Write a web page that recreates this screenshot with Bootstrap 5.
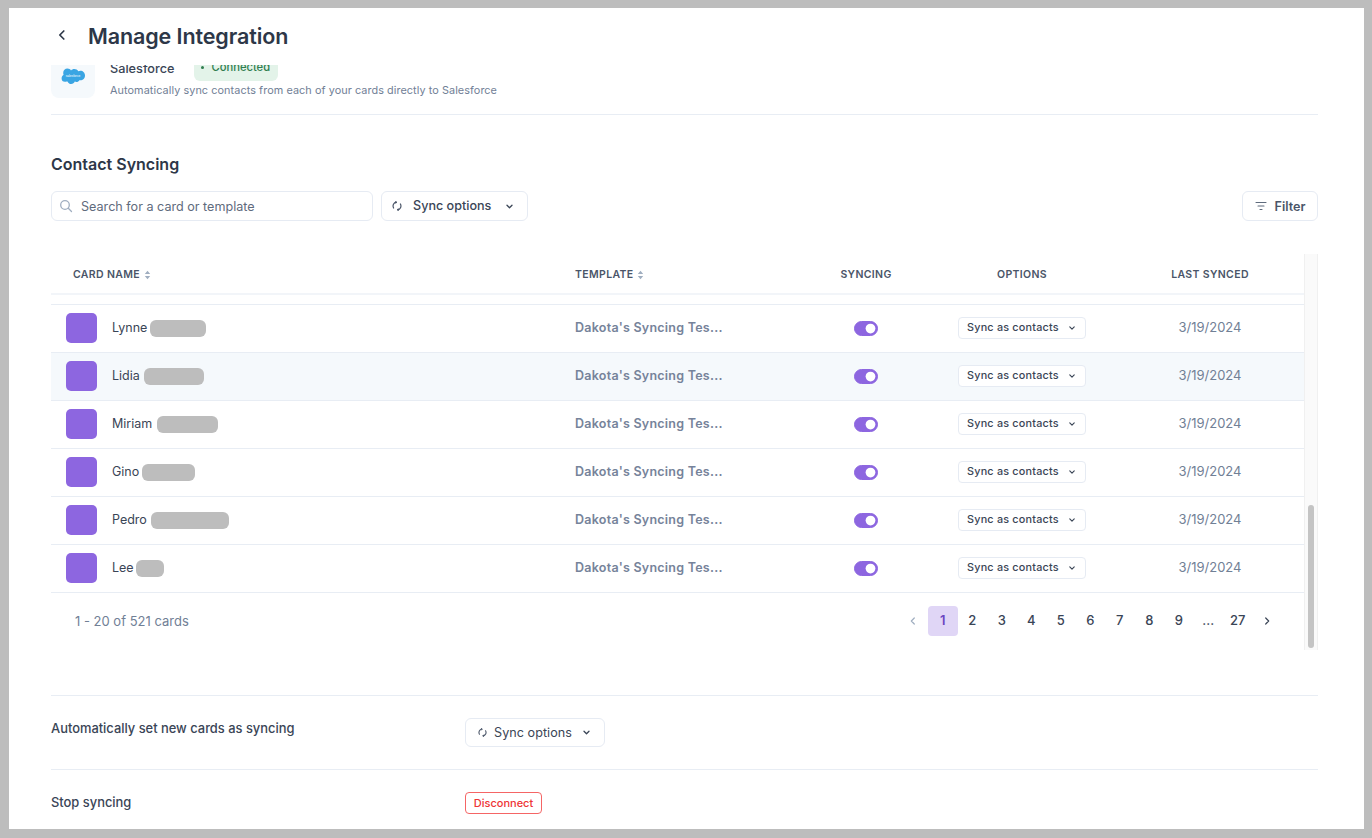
<!DOCTYPE html>
<html lang="en"><head><meta charset="utf-8"><title>Manage Integration</title>
<link href="https://cdn.jsdelivr.net/npm/bootstrap@5.3.0/dist/css/bootstrap.min.css" rel="stylesheet">
<style>
html,body{height:100%}
body{background:#bdbdbd;padding:8px 8px 9px 9px;font-family:Inter,"Liberation Sans",sans-serif;color:#2d3748;overflow:hidden}
.frame{background:#fff;height:821px;overflow:hidden}
.top-bar{height:57px;padding-left:45px;gap:19px}
.back-box{width:15px;padding-bottom:3px}
.page-title{font-size:21.5px;font-weight:600;margin:0;letter-spacing:-.1px;color:#2d3748}
.pane{height:764px;overflow:hidden;padding:0 46px 0 42px}
.intro{margin-top:-11px;height:61px;border-bottom:1px solid #e8edf4;padding-bottom:16px;gap:15px}
.logo-tile{width:44px;height:44px;background:#f5f9fc;border-radius:8px}
.sf-name{font-size:12.7px;font-weight:500;line-height:16px;color:#3a4556}
.conn{background:#e3f3e9;color:#2f7d4f;font-size:11.2px;font-weight:500;height:26px;width:84px;border-radius:6px;margin-left:20px;margin-bottom:2px;gap:7px;padding:0 0 0 7px;line-height:1}
.conn-dot{width:3px;height:3px;background:#2f7d4f;border-radius:50%}
.intro-top{height:29px}
.desc{font-size:10.85px;color:#718096;letter-spacing:.07px;line-height:14px;margin-top:0}
.sec-title{font-size:16px;font-weight:600;margin:38px 0 16px;line-height:22px;color:#2d3748}
.toolbar{gap:8px}
.search-box{width:322px;height:30px;border:1px solid #e6ebf3;border-radius:6px;padding-left:7px;gap:8px;background:#fff}
.search-field{border:0;outline:0;padding:2px 0 0;font-size:12.6px;width:280px;color:#4a5568;background:transparent}
.search-field::placeholder{color:#5f6b7d;opacity:1}
.opt-btn{height:30px;border:1px solid #e6ebf3;border-radius:6px;background:#fff;color:#3a4556;font-size:12.6px;font-weight:500;padding:0;display:inline-flex;align-items:center;justify-content:flex-start}
.opt-btn>span{padding-top:1px}
.opt-a{width:147px;padding-left:10px}
.opt-a>span{margin:0 14px 0 11px}
.opt-b{width:76px;gap:8px;font-weight:600;color:#4a5568;justify-content:center}
.opt-b>span{padding-top:2px}
.opt-c{width:140px;height:29px;font-weight:400;padding-left:12px}
.opt-c>span{margin:0 10px 0 7px;letter-spacing:.05px}
.tbl-zone{margin-top:33px;height:396px}
.tbl-main{width:1253px}
.scroll-track{width:14px;background:#fafafa;border:solid #f0f0f0;border-width:0 1px;padding:0 3px 2px;display:flex;align-items:flex-end}
.scroll-thumb{width:7px;height:143px;background:#c4c4c4;border-radius:4px}
.data-table{table-layout:fixed;width:1253px;margin:0;border-collapse:collapse}
.data-table th{height:40px;padding:2px 0 0;font-size:10.5px;font-weight:600;letter-spacing:.35px;text-transform:uppercase;color:#4a5568;border-bottom:2px solid #f2f5f9;vertical-align:middle;text-align:center}
.data-table td{height:48px;padding:0;border-bottom:1px solid #e8edf4;vertical-align:middle;text-align:center;font-size:13px;color:#718096;background:transparent}
.data-table tr.spacer td{height:10px;border-bottom:1px solid #e8edf4}
.data-table tr.hl td{background:#f5f9fc}
.data-table th.c1{padding-left:22px;text-align:left}
.data-table th.c2{padding-left:22px;text-align:left}
.data-table td.c1{padding-left:15px;text-align:left}
.data-table td.c2{padding-left:22px;text-align:left;font-size:12.5px;font-weight:600;color:#76839a;letter-spacing:.25px}
.w1{width:502px}.w2{width:251px}.w3{width:124px}.w4{width:188px}.w5{width:188px}
.sort-mark{margin-left:1px}
.swatch{width:31px;height:30px;background:#8d66e0;border-radius:5px;margin-right:15px;flex:none}
.who{font-size:12.5px;color:#3a4556;margin-right:3px}
.blob{display:inline-block;height:17px;background:#bdbdbd;border-radius:6px}
.b56{width:56px}.b60{width:60px;margin-left:1px}.b61{width:61px;margin-left:2px}.b53{width:53px}.b78{width:78px;margin-left:1px}.b28{width:28px;margin-left:-1px}
.form-check-input.tog{width:24px;height:15px;margin:0;float:none;background-color:#8d66e0;border-color:#8d66e0;vertical-align:middle}
.form-switch.tog-wrap{padding:0;min-height:0;margin:0;display:flex;justify-content:center}
.as-btn{height:22px;width:128px;border:1px solid #e6ebf3;border-radius:4px;background:#fff;padding:0 0 0 8px;font-size:10.8px;font-weight:500;letter-spacing:.22px;color:#3a4556;display:inline-flex;align-items:center;justify-content:flex-start;gap:9px}
.foot-row{height:58px;padding-left:23px;padding-right:22px}
.count{font-size:13px;color:#718096;padding:1px 0 0 1px}
.pager{margin:0 0 2px;align-items:center}
.pager .page-item .page-link{width:29.5px;height:30px;padding:1px 0 0;border:0;border-radius:4px;background:transparent;color:#3a4556;font-size:13px;font-weight:500;display:flex;align-items:center;justify-content:center;margin:0}
.pager .page-item.active .page-link{background:#e0d6f6;color:#6b46c1;font-weight:600}
.set-row{border-top:1px solid #e8edf4;height:74px;padding-top:22px;margin:0}
.set-first{margin-top:45px}
.set-label{width:414px;font-size:12.9px;font-weight:500;color:#3a4556;line-height:21px}
.danger-btn{height:22px;width:77px;border:1px solid #f56565;border-radius:4px;background:#fff;color:#ee3434;font-size:11px;font-weight:500;padding:0;display:inline-flex;align-items:center;justify-content:center}
.sf-mini{font-family:"Liberation Sans",sans-serif;font-size:3.2px;fill:#fff}
</style></head>
<body>
<div class="frame">
  <div class="top-bar d-flex align-items-center">
    <div class="back-box d-flex justify-content-center">
      <svg width="12" height="12" viewBox="0 0 12 12" fill="none" stroke="#2d3748" stroke-width="1.7" stroke-linecap="round" stroke-linejoin="round"><path d="M7.800 2 3.800 6l4 4"/></svg>
    </div>
    <h1 class="page-title">Manage Integration</h1>
  </div>
  <div class="pane">
    <div class="intro d-flex">
      <div class="logo-tile d-flex align-items-center justify-content-center">
        <svg width="24" height="17" viewBox="0 0 24 17"><path fill="#3aa5e3" d="M10 2.400C10.900 1.400 12 .9 13.300.9c1.700 0 3.200.9 4 2.300.7-.3 1.400-.5 2.100-.5 2.600 0 4.600 2.100 4.600 4.800s-2 4.800-4.600 4.800c-.3 0-.7 0-1-.1-.6 1.100-1.700 1.800-3 1.800-.6 0-1.100-.1-1.600-.4-.6 1.400-2 2.400-3.600 2.400-1.700 0-3.100-1.100-3.700-2.600-.2 0-.5.100-.8.100C2.400 14.500.6 12.700.6 10.400c0-1.500.8-2.900 2-3.600-.3-.6-.4-1.200-.4-1.900C2.200 2.500 4.100.6 6.500.6 8 .6 9.300 1.300 10 2.400Z"/><text x="12" y="8.700" text-anchor="middle" class="sf-mini">salesforce</text></svg>
      </div>
      <div>
        <div class="intro-top d-flex align-items-center">
          <span class="sf-name">Salesforce</span>
          <span class="conn d-inline-flex align-items-center"><span class="conn-dot"></span>Connected</span>
        </div>
        <div class="desc">Automatically sync contacts from each of your cards directly to Salesforce</div>
      </div>
    </div>

    <h2 class="sec-title">Contact Syncing</h2>

    <div class="toolbar d-flex align-items-center">
      <div class="search-box d-flex align-items-center">
        <svg width="14" height="14" viewBox="0 0 14 14" fill="none" stroke="#a0aec0" stroke-width="1.300" stroke-linecap="round"><circle cx="6" cy="6" r="4.300"/><path d="m9.300 9.300 3.200 3.200"/></svg>
        <input class="search-field" type="text" placeholder="Search for a card or template">
      </div>
      <button type="button" class="opt-btn opt-a">
        <svg width="10" height="10" viewBox="0 0 10 10" fill="none" stroke="#4a5568" stroke-width="1.200" stroke-linecap="round"><path d="M1.600 7A3.900 3.900 0 0 1 4.400 1.200M8.400 3A3.900 3.900 0 0 1 5.600 8.800"/><path d="M3.600.5l1 .7-.7 1M6.400 9.500l-1-.7.7-1" stroke-width="1"/></svg>
        <span>Sync options</span>
        <svg width="9" height="9" viewBox="0 0 9 9" fill="none" stroke="#3a4556" stroke-width="1.300" stroke-linecap="round" stroke-linejoin="round"><path d="m2 3.200 2.500 2.500L7 3.200"/></svg>
      </button>
      <button type="button" class="opt-btn opt-b ms-auto">
        <svg width="12" height="10" viewBox="0 0 12 10" fill="none" stroke="#5f6b7d" stroke-width="1.100" stroke-linecap="round"><path d="M1 1.500h10M3 5h6M5 8.500h2"/></svg>
        <span>Filter</span>
      </button>
    </div>

    <div class="tbl-zone d-flex">
      <div class="tbl-main">
        <table class="data-table">
          <colgroup><col class="w1"><col class="w2"><col class="w3"><col class="w4"><col class="w5"></colgroup>
          <thead>
            <tr>
              <th class="c1">Card Name <svg class="sort-mark" width="7" height="10" viewBox="0 0 7 10" fill="#a0aec0"><path d="M3.500.8 6.200 4H.8zM3.500 9.200.8 6h5.400z"/></svg></th>
              <th class="c2">Template <svg width="7" height="10" viewBox="0 0 7 10" fill="#a0aec0"><path d="M3.500.8 6.200 4H.8zM3.500 9.200.8 6h5.400z"/></svg></th>
              <th>Syncing</th><th>Options</th><th>Last Synced</th>
            </tr>
          </thead>
          <tbody>
            <tr class="spacer"><td colspan="5"></td></tr>
            <tr><td class="c1"><div class="d-flex align-items-center"><span class="swatch"></span><span class="who">Lynne</span><span class="blob b56"></span></div></td><td class="c2">Dakota's Syncing Tes...</td><td><div class="form-check form-switch tog-wrap"><input class="form-check-input tog" type="checkbox" role="switch" checked aria-label="Syncing"></div></td><td><button type="button" class="as-btn">Sync as contacts <svg width="8" height="8" viewBox="0 0 9 9" fill="none" stroke="#3a4556" stroke-width="1.300" stroke-linecap="round" stroke-linejoin="round"><path d="m2 3.200 2.500 2.500L7 3.200"/></svg></button></td><td>3/19/2024</td></tr>
            <tr class="hl"><td class="c1"><div class="d-flex align-items-center"><span class="swatch"></span><span class="who">Lidia</span><span class="blob b60"></span></div></td><td class="c2">Dakota's Syncing Tes...</td><td><div class="form-check form-switch tog-wrap"><input class="form-check-input tog" type="checkbox" role="switch" checked aria-label="Syncing"></div></td><td><button type="button" class="as-btn">Sync as contacts <svg width="8" height="8" viewBox="0 0 9 9" fill="none" stroke="#3a4556" stroke-width="1.300" stroke-linecap="round" stroke-linejoin="round"><path d="m2 3.200 2.500 2.500L7 3.200"/></svg></button></td><td>3/19/2024</td></tr>
            <tr><td class="c1"><div class="d-flex align-items-center"><span class="swatch"></span><span class="who">Miriam</span><span class="blob b61"></span></div></td><td class="c2">Dakota's Syncing Tes...</td><td><div class="form-check form-switch tog-wrap"><input class="form-check-input tog" type="checkbox" role="switch" checked aria-label="Syncing"></div></td><td><button type="button" class="as-btn">Sync as contacts <svg width="8" height="8" viewBox="0 0 9 9" fill="none" stroke="#3a4556" stroke-width="1.300" stroke-linecap="round" stroke-linejoin="round"><path d="m2 3.200 2.500 2.500L7 3.200"/></svg></button></td><td>3/19/2024</td></tr>
            <tr><td class="c1"><div class="d-flex align-items-center"><span class="swatch"></span><span class="who">Gino</span><span class="blob b53"></span></div></td><td class="c2">Dakota's Syncing Tes...</td><td><div class="form-check form-switch tog-wrap"><input class="form-check-input tog" type="checkbox" role="switch" checked aria-label="Syncing"></div></td><td><button type="button" class="as-btn">Sync as contacts <svg width="8" height="8" viewBox="0 0 9 9" fill="none" stroke="#3a4556" stroke-width="1.300" stroke-linecap="round" stroke-linejoin="round"><path d="m2 3.200 2.500 2.500L7 3.200"/></svg></button></td><td>3/19/2024</td></tr>
            <tr><td class="c1"><div class="d-flex align-items-center"><span class="swatch"></span><span class="who">Pedro</span><span class="blob b78"></span></div></td><td class="c2">Dakota's Syncing Tes...</td><td><div class="form-check form-switch tog-wrap"><input class="form-check-input tog" type="checkbox" role="switch" checked aria-label="Syncing"></div></td><td><button type="button" class="as-btn">Sync as contacts <svg width="8" height="8" viewBox="0 0 9 9" fill="none" stroke="#3a4556" stroke-width="1.300" stroke-linecap="round" stroke-linejoin="round"><path d="m2 3.200 2.500 2.500L7 3.200"/></svg></button></td><td>3/19/2024</td></tr>
            <tr><td class="c1"><div class="d-flex align-items-center"><span class="swatch"></span><span class="who">Lee</span><span class="blob b28"></span></div></td><td class="c2">Dakota's Syncing Tes...</td><td><div class="form-check form-switch tog-wrap"><input class="form-check-input tog" type="checkbox" role="switch" checked aria-label="Syncing"></div></td><td><button type="button" class="as-btn">Sync as contacts <svg width="8" height="8" viewBox="0 0 9 9" fill="none" stroke="#3a4556" stroke-width="1.300" stroke-linecap="round" stroke-linejoin="round"><path d="m2 3.200 2.500 2.500L7 3.200"/></svg></button></td><td>3/19/2024</td></tr>
          </tbody>
        </table>
        <div class="foot-row d-flex align-items-center justify-content-between">
          <span class="count">1 - 20 of 521 cards</span>
          <ul class="pagination pager">
            <li class="page-item"><a class="page-link" href="#" aria-label="Previous"><svg width="10" height="10" viewBox="0 0 10 10" fill="none" stroke="#a0aec0" stroke-width="1.200" stroke-linecap="round" stroke-linejoin="round"><path d="M6.300 2 3.300 5l3 3"/></svg></a></li>
            <li class="page-item active"><a class="page-link" href="#">1</a></li>
            <li class="page-item"><a class="page-link" href="#">2</a></li>
            <li class="page-item"><a class="page-link" href="#">3</a></li>
            <li class="page-item"><a class="page-link" href="#">4</a></li>
            <li class="page-item"><a class="page-link" href="#">5</a></li>
            <li class="page-item"><a class="page-link" href="#">6</a></li>
            <li class="page-item"><a class="page-link" href="#">7</a></li>
            <li class="page-item"><a class="page-link" href="#">8</a></li>
            <li class="page-item"><a class="page-link" href="#">9</a></li>
            <li class="page-item"><a class="page-link" href="#">...</a></li>
            <li class="page-item"><a class="page-link" href="#">27</a></li>
            <li class="page-item"><a class="page-link" href="#" aria-label="Next"><svg width="10" height="10" viewBox="0 0 10 10" fill="none" stroke="#3a4556" stroke-width="1.200" stroke-linecap="round" stroke-linejoin="round"><path d="m3.700 2 3 3-3 3"/></svg></a></li>
          </ul>
        </div>
      </div>
      <div class="scroll-track"><div class="scroll-thumb"></div></div>
    </div>

    <div class="set-row set-first d-flex align-items-start">
      <div class="set-label">Automatically set new cards as syncing</div>
      <button type="button" class="opt-btn opt-c">
        <svg width="9" height="9" viewBox="0 0 10 10" fill="none" stroke="#4a5568" stroke-width="1.200" stroke-linecap="round"><path d="M1.600 7A3.900 3.900 0 0 1 4.400 1.200M8.400 3A3.900 3.900 0 0 1 5.600 8.800"/><path d="M3.600.5l1 .7-.7 1M6.400 9.500l-1-.7.7-1" stroke-width="1"/></svg>
        <span>Sync options</span>
        <svg width="9" height="9" viewBox="0 0 9 9" fill="none" stroke="#3a4556" stroke-width="1.300" stroke-linecap="round" stroke-linejoin="round"><path d="m2 3.200 2.500 2.500L7 3.200"/></svg>
      </button>
    </div>
    <div class="set-row d-flex align-items-start">
      <div class="set-label">Stop syncing</div>
      <button type="button" class="danger-btn">Disconnect</button>
    </div>
  </div>
</div>
<script src="https://cdn.jsdelivr.net/npm/bootstrap@5.3.0/dist/js/bootstrap.bundle.min.js"></script>
</body></html>
